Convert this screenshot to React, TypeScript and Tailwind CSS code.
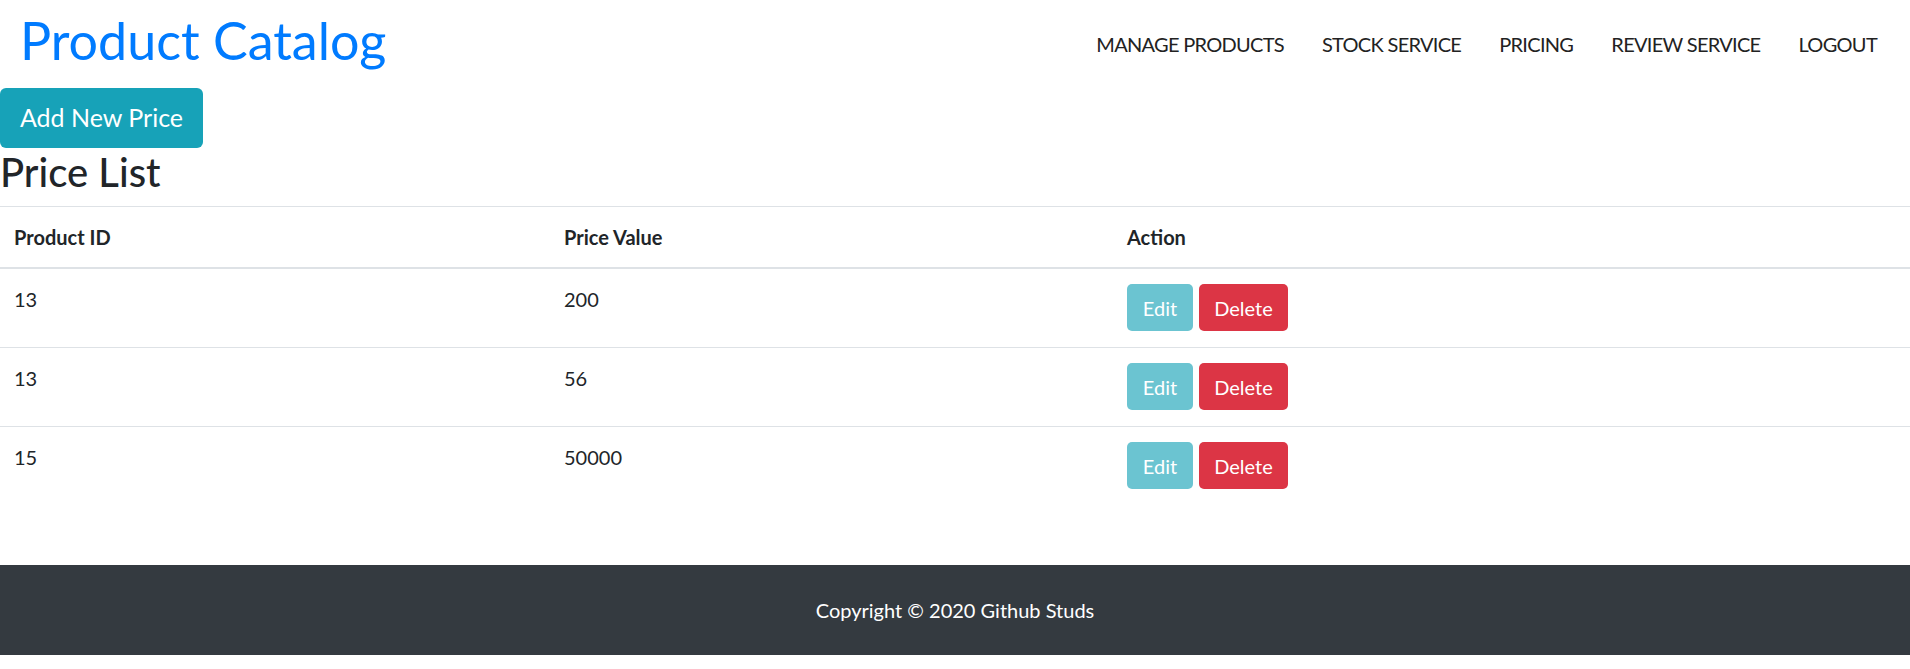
import React from "react"

const prices = [
  { id: 13, value: 200 },
  { id: 13, value: 56 },
  { id: 15, value: 50000 },
]

const links = ["MANAGE PRODUCTS", "STOCK SERVICE", "PRICING", "REVIEW SERVICE", "LOGOUT"]

export default function App() {
  return (
    <div className="min-h-screen bg-white font-['Lato','Open_Sans',sans-serif] text-[#212529]">
      <nav className="flex items-center justify-between h-[88px] pl-5 pr-[14px]">
        <a href="#" className="text-[52px] leading-none text-[#007bff] pb-[8px]">
          Product Catalog
        </a>
        <ul className="flex items-center">
          {links.map((l) => (
            <li key={l}>
              <a href="#" className="block px-[19px] text-[20px] leading-[30px] tracking-[-0.7px] text-[#222]">
                {l}
              </a>
            </li>
          ))}
        </ul>
      </nav>

      <button className="h-[60px] w-[203px] rounded-[6px] bg-[#17a2b8] text-[25px] text-white">
        Add New Price
      </button>
      <h2 className="mb-[10px] text-[40px] leading-[48px] font-medium">Price List</h2>

      {/* price table */}
      <table className="w-full table-fixed border-collapse text-[20px] leading-[30px]">
        <thead>
          <tr>
            <th className="w-[550px] border-t border-b-2 border-[#dee2e6] px-[14px] py-[15px] text-left font-bold">Product ID</th>
            <th className="w-[563px] border-t border-b-2 border-[#dee2e6] px-[14px] py-[15px] text-left font-bold">Price Value</th>
            <th className="border-t border-b-2 border-[#dee2e6] px-[14px] py-[15px] text-left font-bold">Action</th>
          </tr>
        </thead>
        <tbody>
          {prices.map((p, i) => (
            <tr key={i}>
              <td className="border-t border-[#dee2e6] px-[14px] pt-[15px] pb-[16px] align-top">{p.id}</td>
              <td className="border-t border-[#dee2e6] px-[14px] pt-[15px] pb-[16px] align-top">{p.value}</td>
              <td className="border-t border-[#dee2e6] px-[14px] pt-[15px] pb-[16px] align-top">
                <div className="flex gap-[6px]">
                  <button className="h-[47px] w-[66px] rounded-[5px] bg-[#6bc4d1] text-white">Edit</button>
                  <button className="h-[47px] w-[89px] rounded-[5px] bg-[#dc3545] text-white">Delete</button>
                </div>
              </td>
            </tr>
          ))}
        </tbody>
      </table>

      <footer className="mt-[60px] flex h-[90px] items-center justify-center bg-[#343a40] text-[20px] text-white">
        Copyright © 2020 Github Studs
      </footer>
    </div>
  )
}
